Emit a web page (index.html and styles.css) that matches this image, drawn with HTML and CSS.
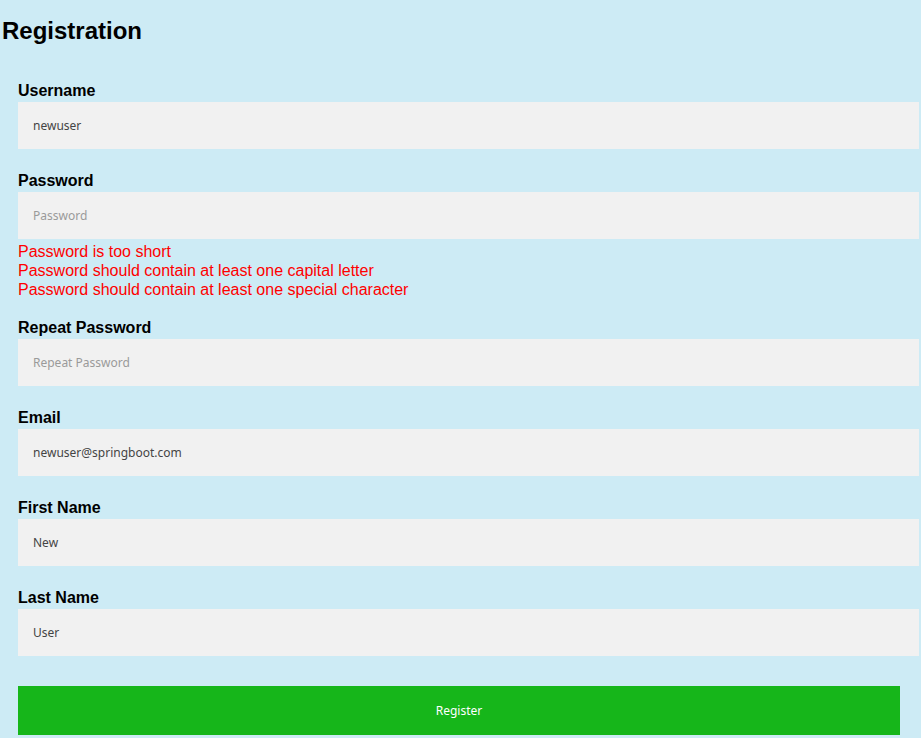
FILE: index.html
```html
<!DOCTYPE html>
<html>
<head>
<meta charset="utf-8">
<link rel="stylesheet" href="styles.css">
</head>
<body>
<h1 class="title">Registration</h1>
<form class="form">
  <div class="group">
    <label class="label">Username</label>
    <input class="field" type="text" value="newuser" placeholder="Username">
  </div>
  <div class="group">
    <label class="label">Password</label>
    <input class="field" type="password" placeholder="Password">
    <div class="errors">
      <div class="error">Password is too short</div>
      <div class="error">Password should contain at least one capital letter</div>
      <div class="error">Password should contain at least one special character</div>
    </div>
  </div>
  <div class="group">
    <label class="label">Repeat Password</label>
    <input class="field" type="password" placeholder="Repeat Password">
  </div>
  <div class="group">
    <label class="label">Email</label>
    <input class="field" type="text" value="newuser@springboot.com" placeholder="Email">
  </div>
  <div class="group">
    <label class="label">First Name</label>
    <input class="field" type="text" value="New" placeholder="First Name">
  </div>
  <div class="group">
    <label class="label">Last Name</label>
    <input class="field" type="text" value="User" placeholder="Last Name">
  </div>
  <button class="submit" type="button">Register</button>
</form>
</body>
</html>
```
FILE: styles.css
```css
html, body {
  margin: 0;
  padding: 0;
  background: #cdebf5;
  font-family: "Liberation Sans", Arial, sans-serif;
  overflow: hidden;
}
.title {
  margin: 17px 0 0 2px;
  font-size: 24px;
  line-height: 28px;
  font-weight: bold;
  color: #000;
}
.form {
  padding: 36px 2px 0 18px;
  display: flex;
  flex-direction: column;
}
.group {
  display: flex;
  flex-direction: column;
  margin-bottom: 19px;
}
.label {
  font-size: 16px;
  line-height: 19px;
  font-weight: bold;
  color: #000;
  margin-bottom: 2px;
}
.field {
  box-sizing: border-box;
  width: 100%;
  height: 47px;
  margin: 0 0 3px 0;
  padding: 0 15px;
  border: none;
  outline: none;
  background: #f1f1f1;
  font-family: "Noto Sans", "Open Sans", sans-serif;
  font-size: 12px;
  color: #444;
}
.field::placeholder {
  color: #9a9a9a;
}
.errors {
  display: flex;
  flex-direction: column;
}
.error {
  color: #ff0000;
  font-size: 16px;
  line-height: 19px;
}
.submit {
  margin-top: 8px;
  width: 882px;
  height: 49px;
  border: none;
  background: #16b61a;
  color: #fff;
  font-family: "Noto Sans", "Open Sans", sans-serif;
  font-size: 12px;
  padding: 0;
}
```
